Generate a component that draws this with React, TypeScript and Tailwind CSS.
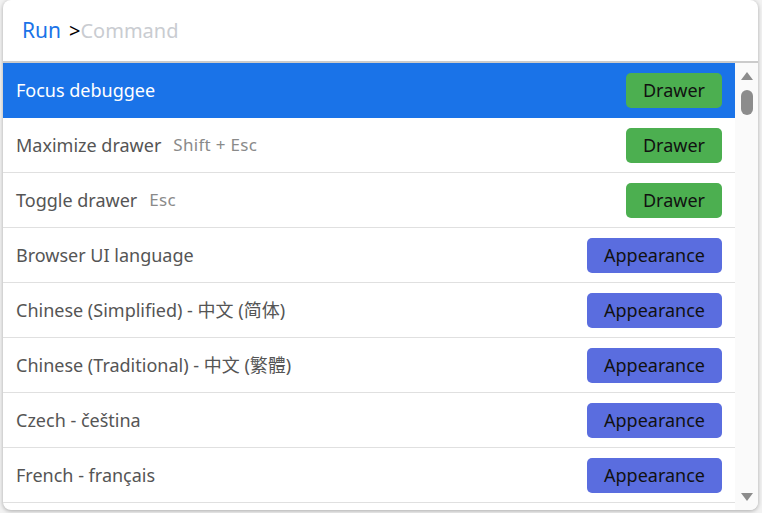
const commands = [
  { title: 'Focus debuggee', shortcut: '', tag: 'Drawer' },
  { title: 'Maximize drawer', shortcut: 'Shift + Esc', tag: 'Drawer' },
  { title: 'Toggle drawer', shortcut: 'Esc', tag: 'Drawer' },
  { title: 'Browser UI language', shortcut: '', tag: 'Appearance' },
  { title: 'Chinese (Simplified) - 中文 (简体)', shortcut: '', tag: 'Appearance' },
  { title: 'Chinese (Traditional) - 中文 (繁體)', shortcut: '', tag: 'Appearance' },
  { title: 'Czech - čeština', shortcut: '', tag: 'Appearance' },
  { title: 'French - français', shortcut: '', tag: 'Appearance' },
];

const font = { fontFamily: '"Noto Sans", "Noto Sans CJK SC", sans-serif' };

export default function App() {
  return (
    <div className="w-[762px] h-[513px] bg-[#f2f2f2] overflow-hidden" style={font}>
      <div className="ml-[3px] w-[755px] h-[510px] bg-white rounded-[8px] shadow-[0_1px_4px_rgba(0,0,0,0.3)] flex flex-col overflow-hidden">
        <div className="h-[61px] flex items-center pl-[19px] text-[20px] shrink-0">
          <span className="text-[#1a73e8] text-[21px]">Run</span>
          <span className="ml-[8px] text-black">&gt;</span>
          <span className="text-[#c9ccd1]">Command</span>
        </div>
        <div className="h-[2px] bg-[#cbcbcb] shrink-0" />
        <div className="flex flex-1 min-h-0">
          <div className="flex-1 overflow-hidden">
            {commands.map((c, i) => {
              const selected = i === 0;
              return (
                <div
                  key={c.title}
                  className={
                    selected
                      ? 'h-[55px] flex items-center px-[13px] bg-[#1a73e8] text-white border-b border-[#1a73e8]'
                      : 'h-[55px] flex items-center px-[13px] text-[#555] border-b border-[#e0e0e0]'
                  }
                >
                  <span className="text-[18px]">{c.title}</span>
                  {c.shortcut && <span className="ml-[12px] text-[17px] tracking-[0.3px] text-[#8a8a8a]">{c.shortcut}</span>}
                  <span
                    className={
                      c.tag === 'Drawer'
                        ? 'ml-auto h-[35px] flex items-center px-[17px] rounded-[5px] bg-[#4caf50] text-[#111] text-[18px]'
                        : 'ml-auto h-[35px] flex items-center px-[17px] rounded-[5px] bg-[#5a6ddf] text-[#111] text-[18px]'
                    }
                  >
                    {c.tag}
                  </span>
                </div>
              );
            })}
          </div>
          <div className="w-[23px] bg-[#fafafa] flex flex-col items-center pt-[9px] pb-[9px]">
            <svg width="12" height="8" viewBox="0 0 12 8">
              <path d="M6 0 L12 8 L0 8 Z" fill="#8c8c8c" />
            </svg>
            <div className="mt-[10px] w-[12px] h-[25px] rounded-full bg-[#8c8c8c]" />
            <svg className="mt-auto" width="12" height="8" viewBox="0 0 12 8">
              <path d="M0 0 L12 0 L6 8 Z" fill="#8c8c8c" />
            </svg>
          </div>
        </div>
      </div>
    </div>
  );
}
